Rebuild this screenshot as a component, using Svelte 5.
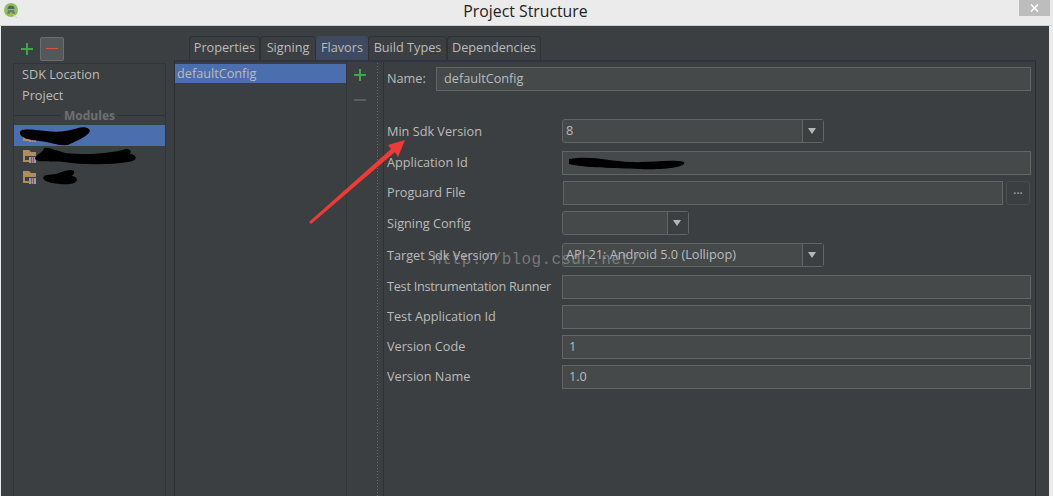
<script>
  const tabs = [
    { name: "Properties", w: 71 },
    { name: "Signing", w: 56 },
    { name: "Flavors", w: 52, active: true },
    { name: "Build Types", w: 79 },
    { name: "Dependencies", w: 94 },
  ];

  const modules = [
    { blob: "M20 132 C22 127 34 130 46 131 C58 133 68 131 78 128 C86 126 92 129 89 133 C84 138 76 141 68 145 C58 146 50 142 40 141 C30 140 19 138 20 132Z", selected: true },
    { blob: "M35 158 C38 153 44 152 44 148 C50 147 56 151 66 153 C84 155 110 154 126 149 C132 149 131 153 130 154 C138 155 138 161 128 162 C108 165 84 165 64 162 C54 161 34 163 35 158Z" },
    { blob: "M43 178 C44 174 50 175 56 174 C62 172 70 168 74 171 C75 174 72 175 72 176 C79 177 79 183 70 184 C60 185 44 183 43 178Z" },
  ];
</script>

<div class="window">
  <header class="titlebar">
    <svg class="logo" width="16" height="18" viewBox="0 0 16 18">
      <circle cx="8" cy="9" r="7" fill="#8fbf60" />
      <path d="M4.500 8 A3.500 3.500 0 0 1 11.500 8Z" fill="#55665a" />
      <path d="M5 9 H11 L12 13 H10 L8 10.500 L6 13 H4Z" fill="#6d7d70" />
      <path d="M10 13 L14 17" stroke="#cfcfcf" stroke-width="1" />
    </svg>
    <span class="title">Project Structure</span>
    <button class="close" aria-label="Close">
      <svg width="9" height="8" viewBox="0 0 9 8"><path d="M1 0.5 L8 7.5 M8 0.5 L1 7.5" stroke="#fff" stroke-width="1.5" /></svg>
    </button>
  </header>

  <div class="body">
    <aside class="left">
      <div class="left-tools">
        <svg width="14" height="14" viewBox="0 0 14 14"><path d="M7 1 V13 M1 7 H13" stroke="#3fa64d" stroke-width="2" /></svg>
        <span class="minus-btn"><span class="minus"></span></span>
      </div>
      <div class="side-list">
        <div class="side-item">SDK Location</div>
        <div class="side-item">Project</div>
        <div class="modules-head"><span>Modules</span></div>
        {#each modules as m}
          <div class="module" class:selected={m.selected}>
            <svg class="folder" width="16" height="15" viewBox="0 0 16 15">
              <path d="M1 1 H7 L9 3 H14 V5 H3 V13 H1Z" fill="#b08d5e" />
              <path d="M3 5 H14 V7 H3Z M3 11 H7 V13 H3Z" fill="#b08d5e" />
              <rect x="7" y="8" width="2" height="6" fill="#9a9a9a" />
              <rect x="9.500" y="8" width="2" height="6" fill="#c97c7c" />
              <rect x="12" y="8" width="2" height="6" fill="#7fa4c4" />
            </svg>
          </div>
        {/each}
      </div>
    </aside>

    <div class="split"><span class="grip"></span></div>

    <main class="content">
      <nav class="tabs">
        {#each tabs as t}
          <div class="tab" class:active={t.active} style="width: {t.w}px">{t.name}</div>
        {/each}
      </nav>

      <div class="panel">
        <div class="flavor-list">
          <div class="flavor selected">defaultConfig</div>
        </div>
        <div class="flavor-tools">
          <svg width="14" height="14" viewBox="0 0 14 14"><path d="M7 1 V13 M1 7 H13" stroke="#3fa64d" stroke-width="2" /></svg>
          <span class="dim-minus"></span>
        </div>
        <div class="split2"></div>
        <div class="form">
          <div class="name-row">
            <span class="name-label">Name:</span>
            <div class="field wide">defaultConfig</div>
          </div>

          <div class="row">
            <span class="label">Min Sdk Version</span>
            <div class="combo w262"><span class="val">8</span><span class="arrow"></span></div>
          </div>
          <div class="row tall">
            <span class="label">Application Id</span>
            <div class="field"></div>
          </div>
          <div class="row">
            <span class="label">Proguard File</span>
            <div class="field browse-field"></div>
            <div class="browse">...</div>
          </div>
          <div class="row">
            <span class="label">Signing Config</span>
            <div class="combo w127"><span class="val"></span><span class="arrow"></span></div>
          </div>
          <div class="row tall">
            <span class="label">Target Sdk Version</span>
            <div class="combo w262"><span class="val">API 21: Android 5.0 (Lollipop)</span><span class="arrow"></span></div>
          </div>
          <div class="row tall">
            <span class="label tight">Test Instrumentation Runner</span>
            <div class="field"></div>
          </div>
          <div class="row">
            <span class="label">Test Application Id</span>
            <div class="field"></div>
          </div>
          <div class="row">
            <span class="label">Version Code</span>
            <div class="field">1</div>
          </div>
          <div class="row">
            <span class="label">Version Name</span>
            <div class="field">1.0</div>
          </div>
        </div>
      </div>
    </main>
  </div>

  <!-- annotations drawn on top of the screenshot -->
  <svg class="overlay" width="1053" height="496" viewBox="0 0 1053 496">
    {#each modules as m}
      <path d={m.blob} fill="#000" />
    {/each}
    <path d="M569 159 C590 155 610 161 630 162 C650 163 670 159 684 162 C687 167 665 170 640 169 C615 168 585 168 569 164Z" fill="#000" />
    <path d="M309 222 L391 149 L388 145 L405 140 L398 157 L395 152 L311 224Z" fill="#f03a35" />
  </svg>
  <div class="watermark">http://blog.csdn.net/</div>
</div>

<style>
  :global(body) { margin: 0; background: #ebebeb; }
  .window { position: relative; width: 1053px; height: 496px; overflow: hidden; display: flex; flex-direction: column; font-family: "Open Sans", "Noto Sans", sans-serif; font-size: 12.7px; color: #bbbbbb; }

  .titlebar { height: 25px; background: #ebebeb; border-bottom: 1px solid #d0d0d0; display: flex; align-items: center; justify-content: center; position: relative; flex: none; }
  .logo { position: absolute; left: 3px; top: 1px; }
  .title { font-size: 15.8px; color: #222; margin-left: -2px; margin-top: -3px; }
  .close { position: absolute; left: 1019px; top: 0; width: 31px; height: 16px; background: #bdbdbd; border: 0; padding: 0; display: flex; align-items: center; justify-content: center; }

  .body { flex: 1; display: flex; margin: 0 4px 0 1px; background: #3c3f41; min-height: 0; }

  .left { width: 165px; flex: none; display: flex; flex-direction: column; padding-left: 12px; box-sizing: border-box; }
  .left-tools { height: 37px; flex: none; display: flex; align-items: center; padding-left: 7px; gap: 6px; padding-top: 8px; box-sizing: border-box; }
  .minus-btn { width: 22px; height: 22px; border: 1px solid #6b6e70; background: #55585a; border-radius: 2px; display: flex; align-items: center; justify-content: center; }
  .minus { width: 12px; height: 1px; background: #e0503f; }
  .side-list { flex: 1; border: 1px solid #323436; border-bottom: 0; }
  .side-item { height: 21px; line-height: 20px; padding-left: 8px; }
  .modules-head { height: 19px; display: flex; align-items: center; font-weight: 700; font-size: 12px; color: #6e7072; }
  .modules-head::before, .modules-head::after { content: ""; flex: 1; height: 1px; background: #2f3133; }
  .modules-head span { padding: 0 3px; }
  .module { height: 21px; display: flex; align-items: center; padding-left: 8px; }
  .module.selected { background: #4b6eaf; }
  .folder { display: block; }

  .split { width: 8px; flex: none; display: flex; align-items: flex-start; justify-content: flex-start; padding-top: 333px; box-sizing: border-box; }
  .grip { width: 3px; height: 15px; margin-left: 2px; background-image: radial-gradient(#b0b0b0 0.6px, transparent 0.7px); background-size: 2px 2px; }

  .content { flex: 1; display: flex; flex-direction: column; min-width: 0; padding-right: 13px; }
  .tabs { display: flex; padding: 10px 0 0 15px; height: 34px; box-sizing: border-box; flex: none; }
  .tab { height: 24px; line-height: 21px; text-align: center; box-sizing: border-box; border: 1px solid #2f3133; border-bottom: 0; border-radius: 4px 4px 0 0; }
  .tab.active { background: #3f4a60; border-color: #3f4a60; }

  .panel { flex: 1; display: flex; border: 1px solid #2b2d2f; border-top: 2px solid #2f3542; border-bottom: 0; min-height: 0; }
  .flavor-list { width: 172px; flex: none; padding-top: 2px; border-right: 1px solid #333537; box-sizing: border-box; }
  .flavor { height: 19px; line-height: 18px; padding-left: 2px; }
  .flavor.selected { background: #4b6eaf; }
  .flavor-tools { width: 26px; flex: none; display: flex; flex-direction: column; align-items: center; padding-top: 6px; gap: 17px; box-sizing: border-box; }
  .dim-minus { width: 12px; height: 2px; background: #5a5d5f; }
  .split2 { width: 11px; flex: none; background-image: radial-gradient(#6a6d6f 0.6px, transparent 0.7px); background-size: 3px 3px; background-position: 3px 0; background-repeat: repeat-y; border-right: 1px solid #2f3133; box-sizing: border-box; }

  .form { flex: 1; padding: 5px 0 0 3px; min-width: 0; }
  .name-row { display: flex; align-items: center; height: 24px; margin-bottom: 28px; }
  .name-label { width: 49px; flex: none; padding-bottom: 2px; }
  .row { display: flex; align-items: center; margin-top: 6px; height: 24px; }
  .row.tall { margin-top: 8px; }
  .label { width: 175px; flex: none; white-space: nowrap; padding-bottom: 2px; }
  .label.tight { letter-spacing: -0.26px; }
  .row:has(.combo) .label { padding-bottom: 0; }

  .field { box-sizing: border-box; height: 24px; width: 469px; border: 1px solid #646464; background: #45494a; line-height: 20px; padding-left: 6px; }
  .field.wide { width: 595px; padding-left: 7px; }
  .field.browse-field { width: 440px; margin-left: 1px; }
  .browse { width: 24px; height: 24px; margin-left: 3px; box-sizing: border-box; border: 1px solid #4a4d4f; border-radius: 3px; text-align: center; line-height: 16px; font-size: 11px; color: #999; font-weight: 700; }

  .combo { box-sizing: border-box; height: 24px; border: 1px solid #646464; border-radius: 3px; background: #45494a; display: flex; }
  .w262 { width: 262px; }
  .w127 { width: 127px; }
  .val { flex: 1; line-height: 20px; padding-left: 3px; white-space: nowrap; }
  .arrow { width: 20px; flex: none; border-left: 1px solid #646464; background: #3c3f41; position: relative; }
  .arrow::after { content: ""; position: absolute; left: 5px; top: 8px; border: 4px solid transparent; border-top: 6px solid #b5b5b5; border-bottom: 0; }

  .overlay { position: absolute; left: 0; top: 0; pointer-events: none; }
  .watermark { position: absolute; left: 432px; top: 251px; font-family: "Liberation Mono", monospace; font-size: 16px; color: rgba(170, 170, 170, 0.55); white-space: nowrap; letter-spacing: 0.35px; }
</style>
